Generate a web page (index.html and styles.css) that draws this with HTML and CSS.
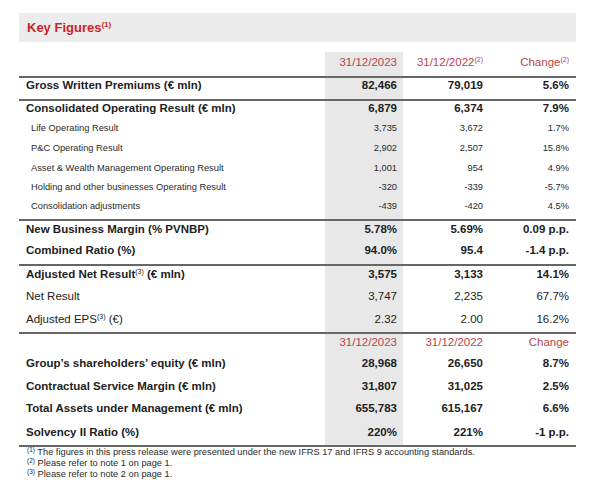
FILE: index.html
```html
<!DOCTYPE html>
<html lang="en">
<head>
<meta charset="utf-8">
<title>Key Figures</title>
<link rel="stylesheet" href="styles.css">
</head>
<body>
<div class="page">
  <div class="banner"><h1 class="title">Key Figures<span class="sup">(1)</span></h1></div>
  <table class="kf">
    <colgroup><col class="c-label"><col class="c-cur"><col class="c-prev"><col class="c-chg"></colgroup>
    <tr class="hdr hdr1">
      <td class="lbl"></td><td class="cur">31/12/2023</td><td>31/12/2022<span class="sup">(2)</span></td><td>Change<span class="sup">(2)</span></td>
    </tr>
    <tr class="b sep pt0 pb7">
      <td class="lbl">Gross Written Premiums (€ mln)</td><td class="cur">82,466</td><td>79,019</td><td>5.6%</td>
    </tr>
    <tr class="b sep pt0 pb4">
      <td class="lbl">Consolidated Operating Result (€ mln)</td><td class="cur">6,879</td><td>6,374</td><td>7.9%</td>
    </tr>
    <tr class="sub pb5">
      <td class="lbl">Life Operating Result</td><td class="cur">3,735</td><td>3,672</td><td>1.7%</td>
    </tr>
    <tr class="sub pb5">
      <td class="lbl">P&amp;C Operating Result</td><td class="cur">2,902</td><td>2,507</td><td>15.8%</td>
    </tr>
    <tr class="sub pb4">
      <td class="lbl">Asset &amp; Wealth Management Operating Result</td><td class="cur">1,001</td><td>954</td><td>4.9%</td>
    </tr>
    <tr class="sub pb4">
      <td class="lbl">Holding and other businesses Operating Result</td><td class="cur">-320</td><td>-339</td><td>-5.7%</td>
    </tr>
    <tr class="sub pb7">
      <td class="lbl">Consolidation adjustments</td><td class="cur">-439</td><td>-420</td><td>4.5%</td>
    </tr>
    <tr class="b sep pb6">
      <td class="lbl">New Business Margin (% PVNBP)</td><td class="cur">5.78%</td><td>5.69%</td><td>0.09 p.p.</td>
    </tr>
    <tr class="b pb7">
      <td class="lbl">Combined Ratio (%)</td><td class="cur">94.0%</td><td>95.4</td><td>-1.4 p.p.</td>
    </tr>
    <tr class="b sep pb7">
      <td class="lbl">Adjusted Net Result<span class="sup">(3)</span> (€ mln)</td><td class="cur">3,575</td><td>3,133</td><td>14.1%</td>
    </tr>
    <tr class="pb8">
      <td class="lbl">Net Result</td><td class="cur">3,747</td><td>2,235</td><td>67.7%</td>
    </tr>
    <tr class="pb6">
      <td class="lbl">Adjusted EPS<span class="sup">(3)</span> (€)</td><td class="cur">2.32</td><td>2.00</td><td>16.2%</td>
    </tr>
    <tr class="hdr sep pb6">
      <td class="lbl"></td><td class="cur">31/12/2023</td><td>31/12/2022</td><td>Change</td>
    </tr>
    <tr class="b pb8">
      <td class="lbl">Group’s shareholders’ equity (€ mln)</td><td class="cur">28,968</td><td>26,650</td><td>8.7%</td>
    </tr>
    <tr class="b pb7">
      <td class="lbl">Contractual Service Margin (€ mln)</td><td class="cur">31,807</td><td>31,025</td><td>2.5%</td>
    </tr>
    <tr class="b pb9">
      <td class="lbl">Total Assets under Management (€ mln)</td><td class="cur">655,783</td><td>615,167</td><td>6.6%</td>
    </tr>
    <tr class="b last pb6">
      <td class="lbl">Solvency II Ratio (%)</td><td class="cur">220%</td><td>221%</td><td>-1 p.p.</td>
    </tr>
  </table>
  <div class="notes">
    <div><span class="nsup">(1)</span> The figures in this press release were presented under the new IFRS 17 and IFRS 9 accounting standards.</div>
    <div><span class="nsup">(2)</span> Please refer to note 1 on page 1.</div>
    <div><span class="nsup">(3)</span> Please refer to note 2 on page 1.</div>
  </div>
</div>
</body>
</html>
```

FILE: styles.css
```css
* { box-sizing: border-box; }
body {
  margin: 0;
  background: #ffffff;
  font-family: "Liberation Sans", Arial, sans-serif;
  color: #222222;
}
.page {
  padding: 13px 0 0 19px;
  width: 600px;
}
.banner {
  width: 557px;
  height: 29px;
  background: #ececec;
  padding-left: 8px;
}
.title {
  margin: 0;
  font-size: 13px;
  line-height: 30px;
  font-weight: bold;
  color: #cc1f27;
}
.title .sup {
  font-size: 8px;
  vertical-align: 5px;
  line-height: 0;
}
.kf {
  margin-top: 10px;
  width: 557px;
  table-layout: fixed;
  border-collapse: separate;
  border-spacing: 0;
}
.c-label { width: 306px; }
.c-cur { width: 78px; }
.c-prev { width: 87px; }
.c-chg { width: 86px; }
.kf td {
  font-size: 11.5px;
  line-height: 14px;
  padding: 1px 7px 6px 7px;
  text-align: right;
  vertical-align: top;
  white-space: nowrap;
  overflow: visible;
}
.kf td.lbl { text-align: left; }
.kf td.cur {
  background: #e8e8e8;
  padding-right: 6px;
}
.kf .b td { font-weight: bold; }
.kf .hdr td { color: #b9434b; }
.kf .hdr1 td { padding-top: 3px; padding-bottom: 7px; }
.kf .sep td { border-top: 2px solid #666666; }
.kf .last td { border-bottom: 2px solid #666666; }
.kf .pt0 td { padding-top: 0; }
.kf .pb4 td { padding-bottom: 4px; }
.kf .pb5 td { padding-bottom: 5px; }
.kf .pb6 td { padding-bottom: 6px; }
.kf .pb7 td { padding-bottom: 7px; }
.kf .pb8 td { padding-bottom: 8px; }
.kf .pb9 td { padding-bottom: 9px; }
.kf .sub td {
  font-size: 9.3px;
  line-height: 12px;
  padding-top: 3px;
  color: #2a2a2a;
}
.kf .sub td.lbl { padding-left: 12px; }
.kf .sup {
  font-size: 7px;
  vertical-align: 4px;
  line-height: 0;
  font-weight: normal;
}
.notes {
  padding-left: 8px;
  font-size: 9.25px;
  line-height: 11px;
  color: #2a2a2a;
}
.nsup {
  font-size: 6.5px;
  vertical-align: 3px;
  line-height: 0;
}
```
